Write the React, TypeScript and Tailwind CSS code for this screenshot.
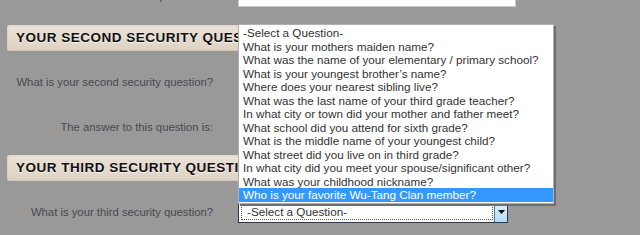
const questions = [
  "-Select a Question-",
  "What is your mothers maiden name?",
  "What was the name of your elementary / primary school?",
  "What is your youngest brother’s name?",
  "Where does your nearest sibling live?",
  "What was the last name of your third grade teacher?",
  "In what city or town did your mother and father meet?",
  "What school did you attend for sixth grade?",
  "What is the middle name of your youngest child?",
  "What street did you live on in third grade?",
  "In what city did you meet your spouse/significant other?",
  "What was your childhood nickname?",
  "Who is your favorite Wu-Tang Clan member?",
];

const font = { fontFamily: '"Liberation Sans", Arial, sans-serif' };

function Row({ label, children }: { label: string; children: React.ReactNode }) {
  return (
    <div className="flex items-center">
      <div className="w-[213px] text-right text-[11.3px] text-[#474a4e]">{label}</div>
      <div className="ml-[25px]">{children}</div>
    </div>
  );
}

function TextInput({ value = "" }: { value?: string }) {
  return (
    <div className="w-[278px] h-[22px] bg-white border border-[#c9c9c9] px-[3px] flex items-center text-[11.3px] text-[#333]">
      {value}
    </div>
  );
}

function Select({ focused = false }: { focused?: boolean }) {
  return (
    <div className="w-[270px] h-[22px] bg-white border border-[#2b3a4a] flex items-stretch p-[2px] gap-[1px]">
      <div
        className={`flex-1 flex items-center pl-[5px] text-[11.7px] text-[#333] ${
          focused ? "border border-dotted border-[#555]" : ""
        }`}
      >
        -Select a Question-
      </div>
      <div className="w-[13px] -my-[2px] -mr-[2px] border-l border-[#3c7fb1] bg-gradient-to-b from-[#e6f4fd] to-[#b4daf5] flex items-center justify-center">
        <svg width="7" height="4" viewBox="0 0 7 4">
          <path d="M0 0h7L3.5 4z" fill="#000" />
        </svg>
      </div>
    </div>
  );
}

function SectionHeader({ title }: { title: string }) {
  return (
    <div className="ml-[7px] w-[548px] h-[26px] bg-gradient-to-b from-[#ebe3d9] to-[#ddd2c4] rounded-[2px] shadow-[inset_0_0_2px_rgba(120,100,80,0.35)] flex items-center pl-[9px]">
      <span className="text-[13.5px] font-bold tracking-[0.5px] text-[#111] [text-shadow:0_1px_1px_rgba(255,255,255,0.7)]">
        {title}
      </span>
    </div>
  );
}

export default function App() {
  return (
    <div className="relative w-[640px] h-[235px] overflow-hidden bg-[#999999]" style={font}>
      <div className="flex flex-col -mt-[15px]">
        <Row label="The answer to this question is:">
          <TextInput value="zamille" />
        </Row>
        <div className="mt-[18px]">
          <SectionHeader title="YOUR SECOND SECURITY QUESTION" />
        </div>
        <div className="mt-[20px]">
          <Row label="What is your second security question?">
            <Select />
          </Row>
        </div>
        <div className="mt-[23px]">
          <Row label="The answer to this question is:">
            <TextInput />
          </Row>
        </div>
        <div className="mt-[17px]">
          <SectionHeader title="YOUR THIRD SECURITY QUESTION" />
        </div>
        <div className="mt-[20px]">
          <Row label="What is your third security question?">
            <Select focused />
          </Row>
        </div>
      </div>

      {/* open dropdown list */}
      <ul className="absolute left-[238px] top-[24px] w-[316px] bg-white border border-[#b0b0b0] shadow-[2px_2px_0_#6e6e6e] py-[1px]">
        {questions.map((q, i) => (
          <li
            key={q}
            className={`h-[13.5px] leading-[13.5px] pl-[4px] text-[11.7px] whitespace-nowrap ${
              i === questions.length - 1 ? "bg-[#3399ff] text-white" : "text-[#333]"
            }`}
          >
            {q}
          </li>
        ))}
      </ul>
    </div>
  );
}
